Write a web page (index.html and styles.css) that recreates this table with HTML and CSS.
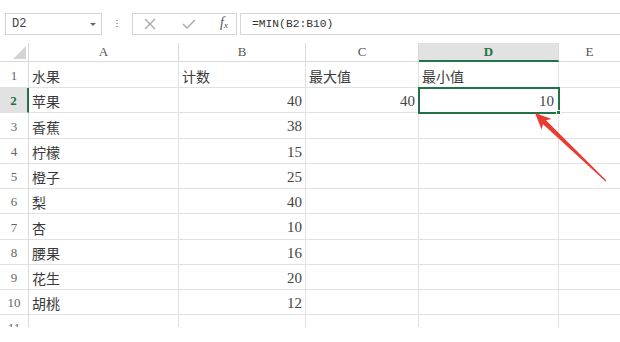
FILE: index.html
```html
<!DOCTYPE html>
<html lang="zh-CN">
<head>
<meta charset="utf-8">
<title>Excel MIN</title>
<link rel="stylesheet" href="styles.css">
</head>
<body>
<div class="app">
  <div class="toolbar">
    <div class="namebox"><span class="nb-text">D2</span><span class="nb-arrow"></span></div>
    <div class="sep"><span class="dots"></span></div>
    <div class="fnbox">
      <svg class="ico" width="14" height="14" viewBox="0 0 14 14"><path d="M2 2 L12 12 M12 2 L2 12" stroke="#a6a6a6" stroke-width="1.3" fill="none"/></svg>
      <svg class="ico" width="16" height="14" viewBox="0 0 16 14"><path d="M2 7 L6 11 L14 3" stroke="#a6a6a6" stroke-width="1.3" fill="none"/></svg>
      <span class="fx"><i>f</i><sub>x</sub></span>
    </div>
    <div class="formula">=MIN(B2:B10)</div>
  </div>
  <div class="sheet-wrap">
    <div class="sheet">
      <div class="hd corner"><span class="tri"></span></div>
      <div class="hd col">A</div>
      <div class="hd col">B</div>
      <div class="hd col">C</div>
      <div class="hd col sel-col">D</div>
      <div class="hd col last">E</div>

      <div class="rn">1</div><div class="c t">水果</div><div class="c t">计数</div><div class="c t">最大值</div><div class="c t">最小值</div><div class="c last"></div>
      <div class="rn sel-row">2</div><div class="c t">苹果</div><div class="c n">40</div><div class="c n">40</div><div class="c n active">10</div><div class="c last"></div>
      <div class="rn">3</div><div class="c t">香蕉</div><div class="c n">38</div><div class="c"></div><div class="c"></div><div class="c last"></div>
      <div class="rn">4</div><div class="c t">柠檬</div><div class="c n">15</div><div class="c"></div><div class="c"></div><div class="c last"></div>
      <div class="rn">5</div><div class="c t">橙子</div><div class="c n">25</div><div class="c"></div><div class="c"></div><div class="c last"></div>
      <div class="rn">6</div><div class="c t">梨</div><div class="c n">40</div><div class="c"></div><div class="c"></div><div class="c last"></div>
      <div class="rn">7</div><div class="c t">杏</div><div class="c n">10</div><div class="c"></div><div class="c"></div><div class="c last"></div>
      <div class="rn">8</div><div class="c t">腰果</div><div class="c n">16</div><div class="c"></div><div class="c"></div><div class="c last"></div>
      <div class="rn">9</div><div class="c t">花生</div><div class="c n">20</div><div class="c"></div><div class="c"></div><div class="c last"></div>
      <div class="rn">10</div><div class="c t">胡桃</div><div class="c n">12</div><div class="c"></div><div class="c"></div><div class="c last"></div>
      <div class="rn">11</div><div class="c"></div><div class="c"></div><div class="c"></div><div class="c"></div><div class="c last"></div>
    </div>
  </div>
  <svg class="arrow" width="620" height="342" viewBox="0 0 620 342">
    <polygon points="535,113 541.6,129.4 543.0,124.2 605.6,181.5 606.4,180.5 546.0,120.2 551.6,119.0" fill="#ea3b32"/>
  </svg>
</div>
</body>
</html>
```

FILE: styles.css
```css
html, body {
  margin: 0;
  padding: 0;
  background: #ffffff;
}
body {
  width: 620px;
  height: 342px;
  overflow: hidden;
  font-family: "Liberation Serif", "Noto Sans CJK SC", serif;
}
.app {
  position: relative;
  width: 620px;
  height: 342px;
}
.toolbar {
  height: 43px;
  box-sizing: border-box;
  padding: 13px 0 0 5px;
  display: flex;
  align-items: flex-start;
}
.namebox {
  width: 97px;
  height: 22px;
  box-sizing: border-box;
  border: 1px solid #d6d6d6;
  display: flex;
  align-items: center;
  justify-content: space-between;
  padding: 0 5px 0 6px;
}
.nb-text {
  font-family: "Liberation Mono", monospace;
  font-size: 12px;
  color: #444;
}
.nb-arrow {
  width: 0;
  height: 0;
  border-left: 3px solid transparent;
  border-right: 3px solid transparent;
  border-top: 3px solid #666;
}
.sep {
  width: 30px;
  height: 22px;
  display: flex;
  align-items: center;
  justify-content: center;
}
.dots {
  width: 2px;
  height: 10px;
  background: radial-gradient(circle, #b0b0b0 0.8px, transparent 1px) 0 0 / 2px 3px repeat-y;
}
.fnbox {
  width: 105px;
  height: 22px;
  box-sizing: border-box;
  border: 1px solid #d6d6d6;
  display: flex;
  align-items: center;
  padding: 0 8px 0 10px;
  justify-content: space-between;
}
.ico {
  display: block;
}
.fx {
  font-family: "Liberation Serif", serif;
  font-size: 14px;
  color: #555;
  line-height: 14px;
}
.fx sub {
  font-size: 9px;
  font-style: italic;
  vertical-align: -1px;
}
.formula {
  flex: 1;
  margin-left: 3px;
  margin-right: -2px;
  height: 22px;
  box-sizing: border-box;
  border: 1px solid #d6d6d6;
  padding-left: 11px;
  font-family: "Liberation Mono", monospace;
  font-size: 11.3px;
  color: #333;
  display: flex;
  align-items: center;
}
.sheet-wrap {
  height: 284px;
  overflow: hidden;
}
.sheet {
  display: grid;
  grid-template-columns: 29px 150px 127px 113px 140px 61px;
  grid-template-rows: 19px 26px 25px 26px 25px 25px 25px 26px 25px 25px 25px 25px;
}
.sheet > div {
  box-sizing: border-box;
  border-right: 1px solid #e1e1e1;
  border-bottom: 1px solid #e1e1e1;
  display: flex;
}
.sheet > .last {
  border-right: none;
}
.hd {
  align-items: center;
  justify-content: center;
  font-size: 13px;
  color: #555;
  border-color: #d9d9d9 !important;
}
.corner {
  position: relative;
}
.tri {
  position: absolute;
  right: 2px;
  bottom: 2px;
  width: 0;
  height: 0;
  border-left: 13px solid transparent;
  border-bottom: 13px solid #d4d4d4;
}
.sel-col {
  background: #e2e2e2;
  color: #217346;
  font-weight: bold;
  border-bottom: 2px solid #217346 !important;
}
.rn {
  justify-content: center;
  align-items: flex-end;
  padding-bottom: 3px;
  font-size: 13px;
  color: #666;
  border-right-color: #d9d9d9 !important;
}
.sel-row {
  background: #e2e2e2;
  color: #217346;
  font-weight: bold;
  border-right: 2px solid #217346 !important;
}
.c {
  align-items: center;
  padding-top: 2px;
  font-size: 15px;
  color: #333;
}
.t {
  font-family: "Noto Sans CJK SC", sans-serif;
  font-size: 14px;
  padding-left: 3px;
  color: #3a3a3a;
}
.n {
  justify-content: flex-end;
  padding-right: 3px;
  color: #444;
}
.active {
  position: relative;
  outline: 2px solid #217346;
  outline-offset: -1px;
  padding-right: 4px;
}
.active::after {
  content: "";
  position: absolute;
  right: -3px;
  bottom: -3px;
  width: 5px;
  height: 5px;
  background: #217346;
  border: 1px solid #fff;
  box-sizing: border-box;
}
.arrow {
  position: absolute;
  left: 0;
  top: 0;
  pointer-events: none;
}
```
